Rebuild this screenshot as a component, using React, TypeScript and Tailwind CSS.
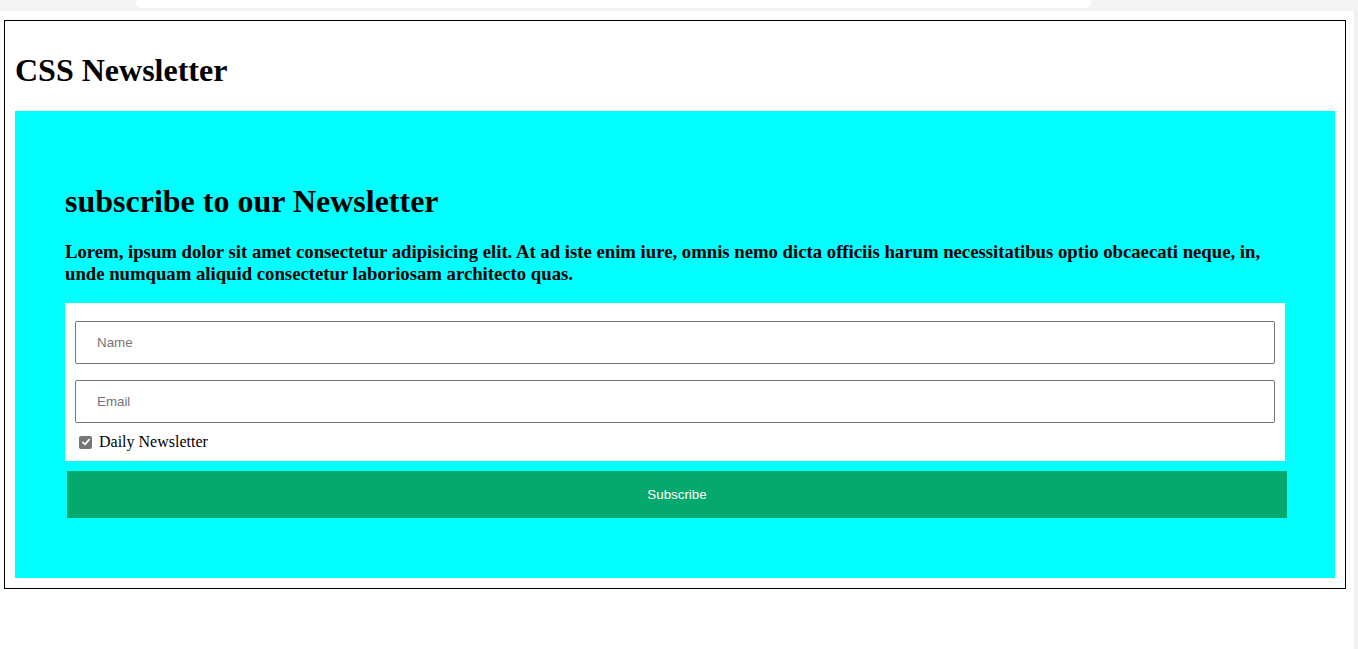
import React from "react";

export default function App() {
  return (
    <div className="min-h-screen bg-white font-['Liberation_Serif','Times_New_Roman',serif] text-black">
      {/* browser chrome sliver */}
      <div className="flex h-[11px] bg-[#f3f3f3]">
        <div className="ml-[135px] h-[8px] w-[957px] rounded-b-[12px] bg-white" />
      </div>

      <div className="flex">
        <div className="flex-1 pl-[4px] pt-[9px]">
          <div className="w-[1342px] border border-black p-[10px]">
            <h1 className="mb-[22px] mt-[21px] text-[32px] font-bold leading-[37px]">
              CSS Newsletter
            </h1>

            <section className="bg-[#00ffff] px-[50px] pb-[60px] pt-[50px]">
              <h2 className="mb-[21px] mt-[22px] text-[32px] font-bold leading-[37px]">
                subscribe to our Newsletter
              </h2>

              <h3 className="mb-[18px] text-[18.72px] font-bold leading-[22px]">
                Lorem, ipsum dolor sit amet consectetur adipisicing elit. At ad
                iste enim iure, omnis nemo dicta officiis harum necessitatibus
                optio obcaecati neque, in, unde numquam aliquid consectetur
                laboriosam architecto quas.
              </h3>

              <form className="bg-white px-[10px] pb-[10px] pt-[18px]">
                <Field placeholder="Name" />
                <div className="mt-[16px]">
                  <Field placeholder="Email" />
                </div>

                <label className="mt-[10px] flex h-[18px] items-center text-[16px]">
                  <span className="ml-[4px] flex h-[13px] w-[13px] items-center justify-center rounded-[2px] bg-[#767676]">
                    <svg viewBox="0 0 12 12" className="h-[10px] w-[10px]">
                      <path
                        d="M2.2 6.3 4.8 8.8 9.8 3.2"
                        fill="none"
                        stroke="white"
                        strokeWidth="2"
                        strokeLinecap="round"
                        strokeLinejoin="round"
                      />
                    </svg>
                  </span>
                  <span className="ml-[7px]">Daily Newsletter</span>
                </label>
              </form>

              <button
                type="button"
                className="ml-[2px] mt-[10px] flex h-[47px] w-[1220px] items-center justify-center bg-[#05a86d] font-['Liberation_Sans',Arial,sans-serif] text-[13.33px] text-white"
              >
                Subscribe
              </button>
            </section>
          </div>
        </div>
        <div className="h-[638px] w-[4px] bg-[#f1f1f1]" />
      </div>
    </div>
  );
}

function Field({ placeholder }: { placeholder: string }) {
  return (
    <input
      type="text"
      placeholder={placeholder}
      className="block h-[43px] w-[1200px] rounded-[2px] border border-[#767676] bg-white pl-[21px] font-['Liberation_Sans',Arial,sans-serif] text-[13.33px] text-black placeholder:text-[#757575] outline-none"
    />
  );
}
